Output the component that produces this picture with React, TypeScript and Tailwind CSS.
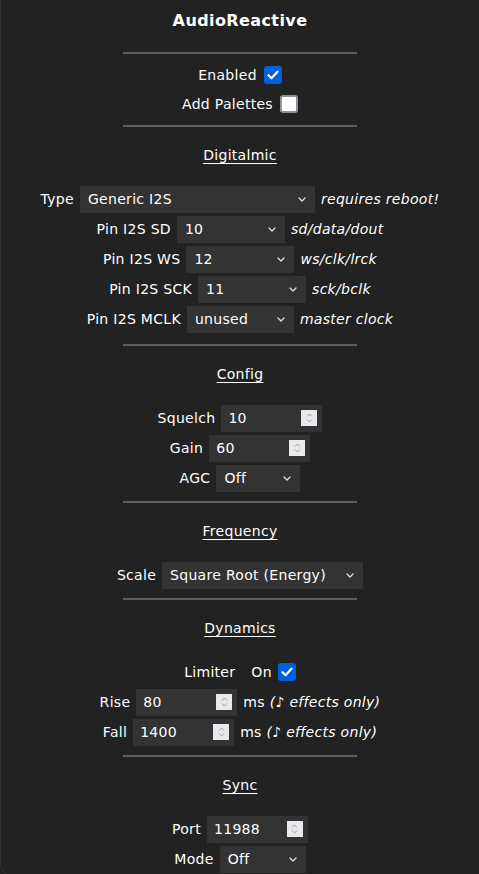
import React from 'react';

// Small downward chevron used on the right side of every select box
function Chevron() {
  return (
    <svg width="8" height="5" viewBox="0 0 8 5" className="shrink-0">
      <path d="M1 1l3 3 3-3" fill="none" stroke="#e0e0e0" strokeWidth="1.3" strokeLinecap="round" strokeLinejoin="round" />
    </svg>
  );
}

function Select({ value, width }: { value: string; width: string }) {
  return (
    <div className={`flex h-[27px] items-center justify-between bg-[#333] pl-2 pr-[9px] ${width}`}>
      <span>{value}</span>
      <Chevron />
    </div>
  );
}

// up/down stepper drawn as a light square with two tiny chevrons
function Spinner() {
  return (
    <span className="flex h-[16px] w-[16px] flex-col items-center justify-center gap-[2px] bg-[#e9e9ed]">
      <svg width="7" height="4" viewBox="0 0 7 4">
        <path d="M1 3.5L3.5 1 6 3.5" fill="none" stroke="#9a9aa6" strokeWidth="1" />
      </svg>
      <svg width="7" height="4" viewBox="0 0 7 4">
        <path d="M1 0.5L3.5 3 6 0.5" fill="none" stroke="#9a9aa6" strokeWidth="1" />
      </svg>
    </span>
  );
}

function NumberInput({ value }: { value: string }) {
  return (
    <div className="flex h-[27px] w-[101px] items-center justify-between bg-[#333] pl-[7px] pr-[5px]">
      <span>{value}</span>
      <Spinner />
    </div>
  );
}

function Checkbox({ checked }: { checked: boolean }) {
  if (!checked) {
    return <span className="block h-[18px] w-[18px] rounded-[3px] border-2 border-[#8f8f9d] bg-white" />;
  }
  return (
    <span className="flex h-[18px] w-[18px] items-center justify-center rounded-[3px] bg-[#0060df]">
      <svg width="12" height="10" viewBox="0 0 12 10">
        <path d="M1.5 5.2l3 3 6-6.5" fill="none" stroke="white" strokeWidth="2.2" strokeLinecap="round" strokeLinejoin="round" />
      </svg>
    </span>
  );
}

function Hr({ className = '' }: { className?: string }) {
  return <div className={`mx-auto h-[2px] w-[234px] bg-[#5e5e5e] ${className}`} />;
}

function Heading({ title }: { title: string }) {
  return (
    <div className="mt-[13px] flex h-[30px] items-center justify-center">
      <span className="underline underline-offset-[3px]">{title}</span>
    </div>
  );
}

function Row({ children, className = '' }: { children: React.ReactNode; className?: string }) {
  return <div className={`flex h-[30px] items-center justify-center gap-[6px] ${className}`}>{children}</div>;
}

function Note({ children }: { children: React.ReactNode }) {
  return <span className="italic">{children}</span>;
}

export default function App() {
  return (
    <div className="min-h-screen bg-[#222] font-['DejaVu_Sans',Verdana,sans-serif] text-[14px] leading-none tracking-[0.3px] text-white">
      <div className="h-[877px] overflow-hidden rounded-bl-[14px] border-b border-l border-[#303030]">
        <div className="flex h-[41px] items-center justify-center text-[16px] font-bold tracking-[0.4px]">AudioReactive</div>

        <Hr className="mt-[11px]" />
        <Row className="mt-[6px] !h-[29px] !gap-[7px]">
          <span>Enabled</span>
          <Checkbox checked />
        </Row>
        <Row className="!h-[29px] !gap-[7px]">
          <span>Add Palettes</span>
          <Checkbox checked={false} />
        </Row>

        <Hr className="mt-[7px]" />
        <Heading title="Digitalmic" />
        <Row className="mt-[14px]">
          <span>Type</span>
          <Select value="Generic I2S" width="w-[235px]" />
          <Note>requires reboot!</Note>
        </Row>
        <Row>
          <span>Pin I2S SD</span>
          <Select value="10" width="w-[108px]" />
          <Note>sd/data/dout</Note>
        </Row>
        <Row>
          <span>Pin I2S WS</span>
          <Select value="12" width="w-[108px]" />
          <Note>ws/clk/lrck</Note>
        </Row>
        <Row>
          <span>Pin I2S SCK</span>
          <Select value="11" width="w-[108px]" />
          <Note>sck/bclk</Note>
        </Row>
        <Row>
          <span>Pin I2S MCLK</span>
          <Select value="unused" width="w-[107px]" />
          <Note>master clock</Note>
        </Row>

        <Hr className="mt-[10px]" />
        <Heading title="Config" />
        <Row className="mt-[14px]">
          <span>Squelch</span>
          <NumberInput value="10" />
        </Row>
        <Row>
          <span>Gain</span>
          <NumberInput value="60" />
        </Row>
        <Row>
          <span>AGC</span>
          <Select value="Off" width="w-[84px]" />
        </Row>

        <Hr className="mt-[8px]" />
        <Heading title="Frequency" />
        <Row className="mt-[14px]">
          <span>Scale</span>
          <Select value="Square Root (Energy)" width="w-[201px]" />
        </Row>

        <Hr className="mt-[8px]" />
        <Heading title="Dynamics" />
        <Row className="mt-[14px]">
          <span>Limiter</span>
          <span className="ml-[10px]">On</span>
          <Checkbox checked />
        </Row>
        <Row>
          <span>Rise</span>
          <NumberInput value="80" />
          <span>
            ms <Note>(♪ effects only)</Note>
          </span>
        </Row>
        <Row>
          <span>Fall</span>
          <NumberInput value="1400" />
          <span>
            ms <Note>(♪ effects only)</Note>
          </span>
        </Row>

        <Hr className="mt-[8px]" />
        <Heading title="Sync" />
        <Row className="mt-[14px]">
          <span>Port</span>
          <NumberInput value="11988" />
        </Row>
        <Row>
          <span>Mode</span>
          <Select value="Off" width="w-[86px]" />
        </Row>
      </div>
    </div>
  );
}
